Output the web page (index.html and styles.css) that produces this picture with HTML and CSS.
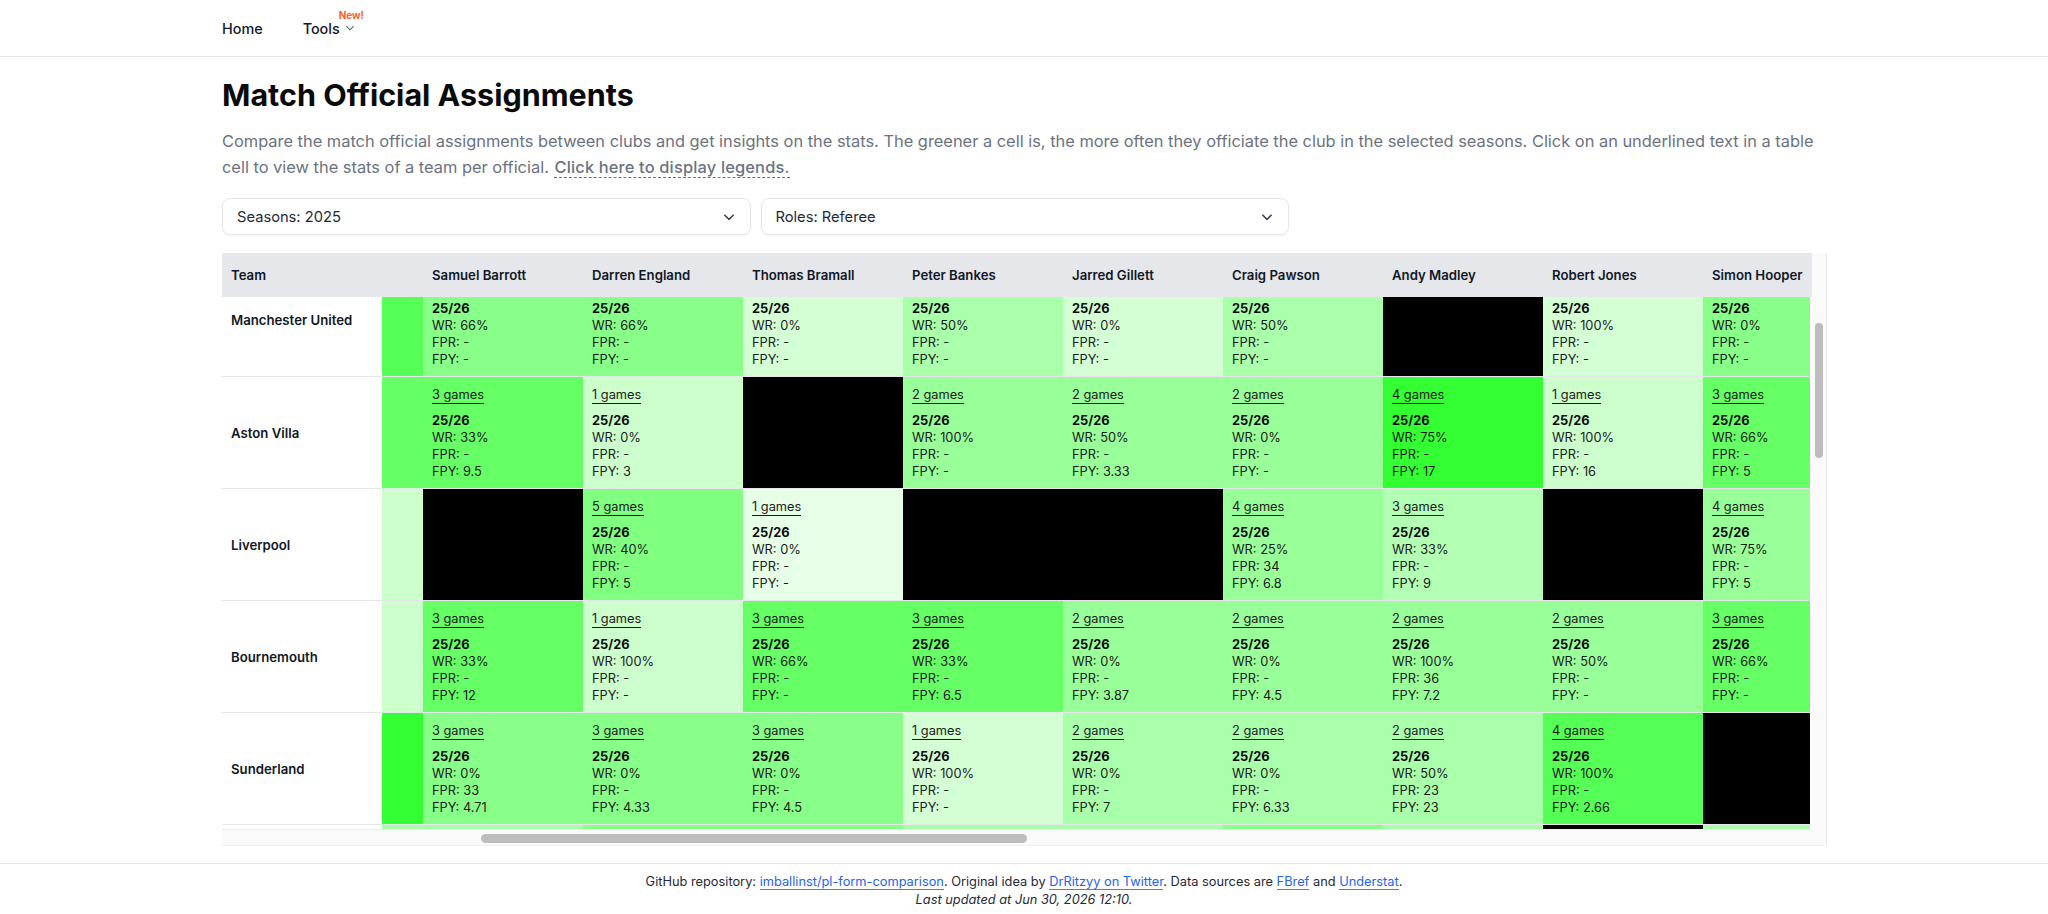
FILE: index.html
```html
<!DOCTYPE html>
<html lang="en">
<head>
    <meta charset="UTF-8">
    <meta name="viewport" content="width=device-width, initial-scale=1.0">
    <title>Match Official Assignments</title>
    <link rel="stylesheet" href="styles.css">
</head>
<body>

    <nav class="top-nav">
        <a class="nav-link" href="#">Home</a>
        <a class="nav-link nav-tools" href="#">Tools
            <svg class="nav-chevron" viewBox="0 0 10 10"><path d="M2 3.5 5 6.5 8 3.5"/></svg>
            <span class="new-badge">New!</span>
        </a>
    </nav>

    <main class="page-content">
        <h1>Match Official Assignments</h1>
        <p class="intro">Compare the match official assignments between clubs and get insights on the stats. The greener a cell is, the more often they officiate the club in the selected seasons. Click on an underlined text in a table cell to view the stats of a team per official. <span class="legend-link">Click here to display legends.</span></p>

        <div class="filters">
            <div class="filter-box">Seasons: 2025
                <svg class="filter-chevron" viewBox="0 0 12 12"><path d="M2 4 6 8 10 4"/></svg>
            </div>
            <div class="filter-box">Roles: Referee
                <svg class="filter-chevron" viewBox="0 0 12 12"><path d="M2 4 6 8 10 4"/></svg>
            </div>
        </div>

        <!-- table is shown scrolled, so the first row is cut off and the second column is only a sliver -->
        <div class="table-frame">
            <div class="table-clip">
                <table class="assignments">
                    <colgroup>
                        <col class="col-team"><col class="col-sliver">
                        <col class="col-ref"><col class="col-ref"><col class="col-ref"><col class="col-ref">
                        <col class="col-ref"><col class="col-ref"><col class="col-ref"><col class="col-ref">
                        <col class="col-last"><col class="col-edge">
                    </colgroup>
                    <thead>
                        <tr>
                            <th>Team</th><th></th>
                            <th>Samuel Barrott</th><th>Darren England</th><th>Thomas Bramall</th><th>Peter Bankes</th>
                            <th>Jarred Gillett</th><th>Craig Pawson</th><th>Andy Madley</th><th>Robert Jones</th>
                            <th>Simon Hooper</th><th></th>
                        </tr>
                    </thead>
                    <tbody>
                        <tr class="row-cut">
                            <td class="team">Manchester United</td>
                            <td class="g55"></td>
                            <td class="g88"><b>25/26</b><span>WR: 66%</span><span>FPR: -</span><span>FPY: -</span></td>
                            <td class="g88"><b>25/26</b><span>WR: 66%</span><span>FPR: -</span><span>FPY: -</span></td>
                            <td class="gd4"><b>25/26</b><span>WR: 0%</span><span>FPR: -</span><span>FPY: -</span></td>
                            <td class="gaa"><b>25/26</b><span>WR: 50%</span><span>FPR: -</span><span>FPY: -</span></td>
                            <td class="gd4"><b>25/26</b><span>WR: 0%</span><span>FPR: -</span><span>FPY: -</span></td>
                            <td class="gaa"><b>25/26</b><span>WR: 50%</span><span>FPR: -</span><span>FPY: -</span></td>
                            <td class="none"></td>
                            <td class="gd4"><b>25/26</b><span>WR: 100%</span><span>FPR: -</span><span>FPY: -</span></td>
                            <td class="g88"><b>25/26</b><span>WR: 0%</span><span>FPR: -</span><span>FPY: -</span></td>
                            <td></td>
                        </tr>
                        <tr>
                            <td class="team">Aston Villa</td>
                            <td class="g66"></td>
                            <td class="g66"><a class="games">3 games</a><b>25/26</b><span>WR: 33%</span><span>FPR: -</span><span>FPY: 9.5</span></td>
                            <td class="gcc"><a class="games">1 games</a><b>25/26</b><span>WR: 0%</span><span>FPR: -</span><span>FPY: 3</span></td>
                            <td class="none"></td>
                            <td class="g99"><a class="games">2 games</a><b>25/26</b><span>WR: 100%</span><span>FPR: -</span><span>FPY: -</span></td>
                            <td class="g99"><a class="games">2 games</a><b>25/26</b><span>WR: 50%</span><span>FPR: -</span><span>FPY: 3.33</span></td>
                            <td class="g99"><a class="games">2 games</a><b>25/26</b><span>WR: 0%</span><span>FPR: -</span><span>FPY: -</span></td>
                            <td class="g33"><a class="games">4 games</a><b>25/26</b><span>WR: 75%</span><span>FPR: -</span><span>FPY: 17</span></td>
                            <td class="gcc"><a class="games">1 games</a><b>25/26</b><span>WR: 100%</span><span>FPR: -</span><span>FPY: 16</span></td>
                            <td class="g66"><a class="games">3 games</a><b>25/26</b><span>WR: 66%</span><span>FPR: -</span><span>FPY: 5</span></td>
                            <td></td>
                        </tr>
                        <tr>
                            <td class="team">Liverpool</td>
                            <td class="gcc"></td>
                            <td class="none"></td>
                            <td class="g80"><a class="games">5 games</a><b>25/26</b><span>WR: 40%</span><span>FPR: -</span><span>FPY: 5</span></td>
                            <td class="ge6"><a class="games">1 games</a><b>25/26</b><span>WR: 0%</span><span>FPR: -</span><span>FPY: -</span></td>
                            <td class="none"></td>
                            <td class="none"></td>
                            <td class="g99"><a class="games">4 games</a><b>25/26</b><span>WR: 25%</span><span>FPR: 34</span><span>FPY: 6.8</span></td>
                            <td class="gb3"><a class="games">3 games</a><b>25/26</b><span>WR: 33%</span><span>FPR: -</span><span>FPY: 9</span></td>
                            <td class="none"></td>
                            <td class="g99"><a class="games">4 games</a><b>25/26</b><span>WR: 75%</span><span>FPR: -</span><span>FPY: 5</span></td>
                            <td></td>
                        </tr>
                        <tr>
                            <td class="team">Bournemouth</td>
                            <td class="gcc"></td>
                            <td class="g66"><a class="games">3 games</a><b>25/26</b><span>WR: 33%</span><span>FPR: -</span><span>FPY: 12</span></td>
                            <td class="gcc"><a class="games">1 games</a><b>25/26</b><span>WR: 100%</span><span>FPR: -</span><span>FPY: -</span></td>
                            <td class="g66"><a class="games">3 games</a><b>25/26</b><span>WR: 66%</span><span>FPR: -</span><span>FPY: -</span></td>
                            <td class="g66"><a class="games">3 games</a><b>25/26</b><span>WR: 33%</span><span>FPR: -</span><span>FPY: 6.5</span></td>
                            <td class="g99"><a class="games">2 games</a><b>25/26</b><span>WR: 0%</span><span>FPR: -</span><span>FPY: 3.87</span></td>
                            <td class="g99"><a class="games">2 games</a><b>25/26</b><span>WR: 0%</span><span>FPR: -</span><span>FPY: 4.5</span></td>
                            <td class="g99"><a class="games">2 games</a><b>25/26</b><span>WR: 100%</span><span>FPR: 36</span><span>FPY: 7.2</span></td>
                            <td class="g99"><a class="games">2 games</a><b>25/26</b><span>WR: 50%</span><span>FPR: -</span><span>FPY: -</span></td>
                            <td class="g66"><a class="games">3 games</a><b>25/26</b><span>WR: 66%</span><span>FPR: -</span><span>FPY: -</span></td>
                            <td></td>
                        </tr>
                        <tr>
                            <td class="team">Sunderland</td>
                            <td class="g33"></td>
                            <td class="g88"><a class="games">3 games</a><b>25/26</b><span>WR: 0%</span><span>FPR: 33</span><span>FPY: 4.71</span></td>
                            <td class="g88"><a class="games">3 games</a><b>25/26</b><span>WR: 0%</span><span>FPR: -</span><span>FPY: 4.33</span></td>
                            <td class="g88"><a class="games">3 games</a><b>25/26</b><span>WR: 0%</span><span>FPR: -</span><span>FPY: 4.5</span></td>
                            <td class="gd4"><a class="games">1 games</a><b>25/26</b><span>WR: 100%</span><span>FPR: -</span><span>FPY: -</span></td>
                            <td class="gaa"><a class="games">2 games</a><b>25/26</b><span>WR: 0%</span><span>FPR: -</span><span>FPY: 7</span></td>
                            <td class="gaa"><a class="games">2 games</a><b>25/26</b><span>WR: 0%</span><span>FPR: -</span><span>FPY: 6.33</span></td>
                            <td class="gaa"><a class="games">2 games</a><b>25/26</b><span>WR: 50%</span><span>FPR: 23</span><span>FPY: 23</span></td>
                            <td class="g55"><a class="games">4 games</a><b>25/26</b><span>WR: 100%</span><span>FPR: -</span><span>FPY: 2.66</span></td>
                            <td class="none"></td>
                            <td></td>
                        </tr>
                        <tr class="row-peek">
                            <td class="team"></td>
                            <td class="gaa"></td><td class="gaa"></td>
                            <td class="g88"></td><td class="g88"></td>
                            <td class="gaa"></td><td class="gaa"></td>
                            <td class="g88"></td><td class="gaa"></td>
                            <td class="none"></td><td class="gaa"></td>
                            <td></td>
                        </tr>
                    </tbody>
                </table>
                <div class="scroll-track-h"><div class="scroll-thumb-h"></div></div>
            </div>
            <div class="scroll-track-v"><div class="scroll-thumb-v"></div></div>
        </div>
    </main>

    <footer class="page-footer">
        <div>GitHub repository: <a href="#">imballinst/pl-form-comparison</a>. Original idea by <a href="#">DrRitzyy on Twitter</a>. Data sources are <a href="#">FBref</a> and <a href="#">Understat</a>.</div>
        <div class="updated">Last updated at Jun 30, 2026 12:10.</div>
    </footer>

</body>
</html>
```
FILE: styles.css
```css
/* Basic Reset & Font */
body, html {
    margin: 0;
    padding: 0;
    font-family: Inter, "Noto Sans", sans-serif;
    background-color: #ffffff;
    color: #111827;
}

/* Top nav */
.top-nav {
    height: 56px;
    border-bottom: 1px solid #e5e7eb;
    padding: 0 222px;
    display: flex;
    align-items: center;
    gap: 40px;
}

.nav-link {
    font-size: 14.4px;
    font-weight: 500;
    color: #111827;
    text-decoration: none;
}

.nav-tools {
    position: relative;
    display: flex;
    align-items: center;
    gap: 4px;
}

.nav-chevron {
    width: 12px;
    height: 12px;
    fill: none;
    stroke: #4b5563;
    stroke-width: 0.9;
}

.new-badge {
    position: absolute;
    top: -11px;
    left: 36px;
    font-size: 10px;
    font-weight: 700;
    color: #f9622e;
}

/* Main area */
.page-content {
    width: 1604px;
    margin: 0 auto;
}

.page-content h1 {
    font-size: 30.5px;
    line-height: 36px;
    font-weight: 700;
    color: #0a0a0a;
    margin: 20px 0 0;
}

.intro {
    font-size: 16.4px;
    line-height: 25.6px;
    color: #6b7280;
    margin: 16px 0 0;
}

.legend-link {
    margin-left: 1px;
    font-weight: 500;
    letter-spacing: 0.17px;
    border-bottom: 1px dashed #6b7280;
}

/* Filters */
.filters {
    display: flex;
    gap: 10px;
    margin-top: 18px;
}

.filter-box {
    width: 528.5px;
    height: 37px;
    box-sizing: border-box;
    padding: 0 14px;
    display: flex;
    align-items: center;
    justify-content: space-between;
    font-size: 14.7px;
    color: #1f2937;
    border: 1px solid #e5e7eb;
    border-radius: 8px;
    box-shadow: 0 1px 2px rgba(0, 0, 0, 0.05);
}

.filter-chevron {
    width: 14px;
    height: 14px;
    fill: none;
    stroke: #374151;
    stroke-width: 1.3;
}

/* Table */
.table-frame {
    display: flex;
    width: 1604px;
    margin-top: 18px;
    background-color: #fafafa;
    border-right: 1px solid #e5e7eb;
    border-bottom: 1px solid #f0f0f0;
}

.table-clip {
    width: 1590px;
}

.assignments {
    width: 1590px;
    table-layout: fixed;
    border-collapse: collapse;
    background-color: #ffffff;
    font-size: 12.8px;
    line-height: 17px;
    color: #1a1a1a;
}

.col-team { width: 160px; }
.col-sliver { width: 41px; }
.col-ref { width: 160px; }
.col-last { width: 107px; }
.col-edge { width: 2px; }

.assignments th {
    height: 44px;
    padding: 0 9px;
    text-align: left;
    font-size: 13.2px;
    font-weight: 600;
    color: #111827;
    white-space: nowrap;
    background-color: #e5e7eb;
}

.assignments td {
    padding: 9px 9px 8px;
    vertical-align: top;
    border-bottom: 1px solid #e5e7eb;
}

.assignments td b,
.assignments td span {
    display: block;
}

.assignments td b {
    font-weight: 700;
    color: #0a0a0a;
}

.assignments td.team {
    vertical-align: middle;
    font-size: 13.2px;
    font-weight: 600;
    color: #111827;
}

.row-cut td {
    padding-top: 3px;
}

.assignments .row-cut td.team {
    vertical-align: top;
    padding-top: 15px;
}

.row-peek td {
    height: 4px;
    padding: 0;
    border-bottom: none;
}

.games {
    display: table;
    margin-bottom: 8px;
    padding-bottom: 1px;
    border-bottom: 1px solid #1a1a1a;
    color: #1a1a1a;
}

/* Cell greens, from most often to least often */
.g33 { background-color: #33ff33; }
.g55 { background-color: #55ff55; }
.g66 { background-color: #66ff66; }
.g80 { background-color: #80ff80; }
.g88 { background-color: #88ff88; }
.g99 { background-color: #99ff99; }
.gaa { background-color: #aaffaa; }
.gb3 { background-color: #b3ffb3; }
.gcc { background-color: #ccffcc; }
.gd4 { background-color: #d4ffd4; }
.ge6 { background-color: #e6ffe6; }
.none { background-color: #000000; }

/* Scrollbars, drawn at the position the reference is scrolled to */
.scroll-track-h {
    height: 16px;
    padding-top: 4px;
    box-sizing: border-box;
    border-top: 1px solid #eeeeee;
}

.scroll-thumb-h {
    width: 546px;
    height: 9px;
    margin-left: 259px;
    border-radius: 5px;
    background-color: #bdbdbd;
}

.scroll-track-v {
    width: 14px;
    padding-top: 70px;
    box-sizing: border-box;
}

.scroll-thumb-v {
    width: 8px;
    height: 135px;
    margin-left: 3px;
    border-radius: 4px;
    background-color: #bdbdbd;
}

/* Footer */
.page-footer {
    margin-top: 17px;
    padding-top: 9px;
    border-top: 1px solid #e5e7eb;
    text-align: center;
    font-size: 12.8px;
    line-height: 17.5px;
    color: #1f2937;
}

.page-footer a {
    color: #2563eb;
    text-decoration: none;
    border-bottom: 1px solid #3b82f6;
}

.updated {
    font-style: italic;
}
```
